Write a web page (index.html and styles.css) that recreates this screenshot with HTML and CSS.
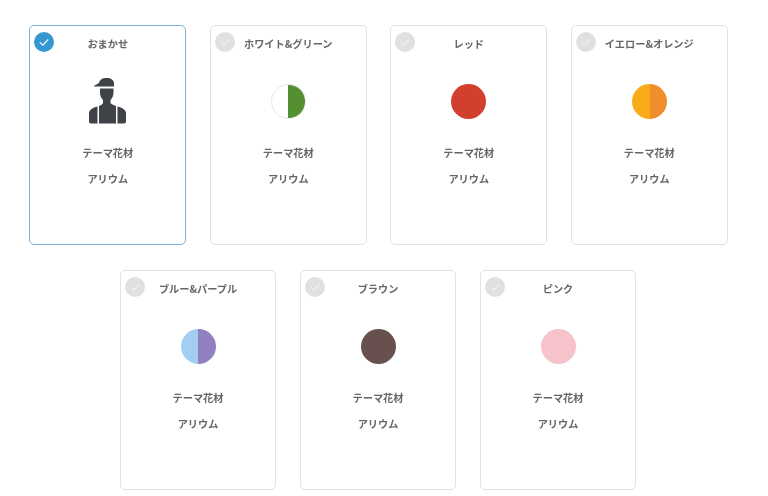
FILE: index.html
```html
<!DOCTYPE html>
<html lang="ja">
<head>
<meta charset="utf-8">
<title>テーマ</title>
<link rel="stylesheet" href="styles.css">
</head>
<body>
<main class="page">
  <div class="row">
    <article class="card selected">
      <span class="check"><svg viewBox="0 0 20 20"><path d="M5.800 10.200l3 2.900 5.400-5.600"/></svg></span>
      <h3 class="title">おまかせ</h3>
      <div class="swatch-wrap">
        <svg class="person" viewBox="0 0 37 46"><path d="M10 8.500V5.500C10 2 13 0 17.500 0S25 2 25 5.500v3z"/><path d="M5 8.500c0-.8.600-1.200 1.500-1.600L10 5v3.500z"/><path d="M11 10.500h13.500v4c0 3-1.200 5.500-3 7.500v3c.5 1 3 2.200 5.500 3v17.500H10V28c2.500-.8 4-2 4-3v-3c-1.800-2-3-4.500-3-7.500z"/><path d="M8.500 28.500v17H2c-1.200 0-2-.8-2-2v-8C0 32 3.500 29.700 8.500 28.500zM28.500 28.500c5 1.200 8.500 3.500 8.500 7v8c0 1.200-.8 2-2 2h-6.500z"/></svg>
      </div>
      <p class="label">テーマ花材</p>
      <p class="label">アリウム</p>
    </article>
    <article class="card">
      <span class="check"><svg viewBox="0 0 20 20"><path d="M5.800 10.200l3 2.900 5.400-5.600"/></svg></span>
      <h3 class="title">ホワイト&amp;グリーン</h3>
      <div class="swatch-wrap"><span class="swatch white-green"></span></div>
      <p class="label">テーマ花材</p>
      <p class="label">アリウム</p>
    </article>
    <article class="card">
      <span class="check"><svg viewBox="0 0 20 20"><path d="M5.800 10.200l3 2.900 5.400-5.600"/></svg></span>
      <h3 class="title">レッド</h3>
      <div class="swatch-wrap"><span class="swatch red"></span></div>
      <p class="label">テーマ花材</p>
      <p class="label">アリウム</p>
    </article>
    <article class="card">
      <span class="check"><svg viewBox="0 0 20 20"><path d="M5.800 10.200l3 2.900 5.400-5.600"/></svg></span>
      <h3 class="title">イエロー&amp;オレンジ</h3>
      <div class="swatch-wrap"><span class="swatch yellow-orange"></span></div>
      <p class="label">テーマ花材</p>
      <p class="label">アリウム</p>
    </article>
  </div>
  <div class="row row-narrow">
    <article class="card">
      <span class="check"><svg viewBox="0 0 20 20"><path d="M5.800 10.200l3 2.900 5.400-5.600"/></svg></span>
      <h3 class="title">ブルー&amp;パープル</h3>
      <div class="swatch-wrap"><span class="swatch blue-purple"></span></div>
      <p class="label">テーマ花材</p>
      <p class="label">アリウム</p>
    </article>
    <article class="card">
      <span class="check"><svg viewBox="0 0 20 20"><path d="M5.800 10.200l3 2.900 5.400-5.600"/></svg></span>
      <h3 class="title">ブラウン</h3>
      <div class="swatch-wrap"><span class="swatch brown"></span></div>
      <p class="label">テーマ花材</p>
      <p class="label">アリウム</p>
    </article>
    <article class="card">
      <span class="check"><svg viewBox="0 0 20 20"><path d="M5.800 10.200l3 2.900 5.400-5.600"/></svg></span>
      <h3 class="title">ピンク</h3>
      <div class="swatch-wrap"><span class="swatch pink"></span></div>
      <p class="label">テーマ花材</p>
      <p class="label">アリウム</p>
    </article>
  </div>
</main>
</body>
</html>
```
FILE: styles.css
```css
* { box-sizing: border-box; }
html, body { margin: 0; background: #fff; }
body {
  width: 768px;
  height: 496px;
  overflow: hidden;
  font-family: "Noto Sans CJK JP", "Noto Sans", sans-serif;
  color: #666;
}
.page {
  display: flex;
  flex-direction: column;
  gap: 25px;
  padding: 25px 40px 0 29px;
  filter: blur(0.45px);
}
.row {
  display: flex;
  justify-content: center;
  gap: 23.5px;
}
.row-narrow {
  gap: 24px;
  padding-right: 1px;
}
.card {
  position: relative;
  width: 157px;
  height: 220px;
  border: 1px solid #e2e2e2;
  border-radius: 5px;
  background: #fff;
  padding-top: 10px;
  text-align: center;
}
.row-narrow .card { width: 156px; }
.card.selected { border-color: #7fb2d8; }
.check {
  position: absolute;
  top: 6px;
  left: 4px;
  width: 20px;
  height: 20px;
  border-radius: 50%;
  background: #e0e0e0;
}
.check svg { display: block; width: 20px; height: 20px; }
.check path { fill: none; stroke: #f0f0f0; stroke-width: 1.1; }
.selected .check { background: #3498d0; }
.selected .check path { stroke: #fff; }
.title {
  margin: 0;
  font-size: 10.2px;
  line-height: 16px;
  font-weight: 700;
}
.swatch-wrap {
  display: flex;
  justify-content: center;
  align-items: center;
  height: 40px;
  margin-top: 29px;
  margin-bottom: 24px;
}
.person { flex: none; width: 37px; height: 46px; fill: #3f4347; }
.swatch {
  display: block;
  width: 35px;
  height: 35px;
  border-radius: 50%;
}
.white-green { background: linear-gradient(90deg, #fff 50%, #548f32 50%); border: 1px solid #e8e8e8; }
.red { background: #d33f2f; }
.yellow-orange { background: linear-gradient(90deg, #f8ab19 50%, #f18e2c 50%); }
.blue-purple { background: linear-gradient(90deg, #a3cef1 50%, #9180c0 50%); }
.brown { background: #67504e; }
.pink { background: #f7c3cb; }
.label {
  margin: 0 0 10px;
  font-size: 10.2px;
  line-height: 16px;
  font-weight: 700;
}
```
